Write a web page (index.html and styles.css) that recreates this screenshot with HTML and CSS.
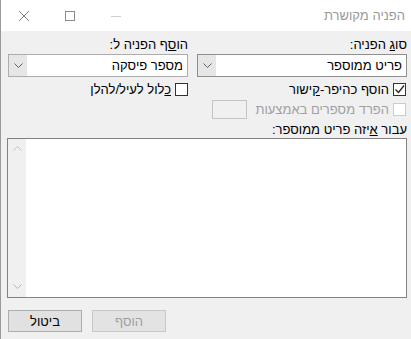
FILE: index.html
```html
<!DOCTYPE html>
<html lang="he" dir="rtl">
<head>
    <meta charset="UTF-8"/>
    <title>הפניה מקושרת</title>
    <link rel="stylesheet" href="styles.css">
</head>
<body>

<div class="window">
    <div class="titlebar">
        <span class="title">הפניה מקושרת</span>
        <div class="caption-buttons">
            <span class="cap-btn">
                <svg width="12" height="12" viewBox="0 0 12 12"><path d="M1 6.5h10" stroke="#d0d0d0" stroke-width="1"/></svg>
            </span>
            <span class="cap-btn">
                <svg width="12" height="12" viewBox="0 0 12 12"><rect x="1.5" y="1.5" width="9" height="9" fill="none" stroke="#8a8a8a" stroke-width="1"/></svg>
            </span>
            <span class="cap-btn">
                <svg width="12" height="12" viewBox="0 0 12 12"><path d="M1 1l10 10M11 1L1 11" stroke="#8a8a8a" stroke-width="1"/></svg>
            </span>
        </div>
    </div>

    <div class="content">
        <div class="columns">
            <div class="col col-right">
                <label class="field-label">סו<u>ג</u> הפניה:</label>
                <div class="select">
                    <span class="select-value">פריט ממוספר</span>
                    <span class="select-arrow">
                        <svg width="9" height="5" viewBox="0 0 9 5"><path d="M0.5 0.5l4 4 4-4" fill="none" stroke="#606060" stroke-width="1"/></svg>
                    </span>
                </div>
                <div class="check-row">
                    <span class="checkbox checked">
                        <svg width="11" height="11" viewBox="0 0 11 11"><path d="M1.5 5.5l3 3 5.5-7" fill="none" stroke="#222" stroke-width="1.3"/></svg>
                    </span>
                    <span>הוסף כהיפר-<u>ק</u>ישור</span>
                </div>
                <div class="check-row disabled">
                    <span class="checkbox"></span>
                    <span>הפרד מספרים באמצעות</span>
                    <span class="small-input"></span>
                </div>
            </div>

            <div class="col col-left">
                <label class="field-label">הו<u>ס</u>ף הפניה ל:</label>
                <div class="select">
                    <span class="select-value">מספר פיסקה</span>
                    <span class="select-arrow">
                        <svg width="9" height="5" viewBox="0 0 9 5"><path d="M0.5 0.5l4 4 4-4" fill="none" stroke="#606060" stroke-width="1"/></svg>
                    </span>
                </div>
                <div class="check-row">
                    <span class="checkbox"></span>
                    <span><u>כ</u>לול לעיל/להלן</span>
                </div>
            </div>
        </div>

        <label class="field-label list-label">עבור <u>א</u>יזה פריט ממוספר:</label>
        <div class="listbox">
            <div class="list-items"></div>
            <div class="scrollbar">
                <svg width="9" height="5" viewBox="0 0 9 5"><path d="M0.5 4.5l4-4 4 4" fill="none" stroke="#c4c4c4" stroke-width="1"/></svg>
                <svg width="9" height="5" viewBox="0 0 9 5"><path d="M0.5 0.5l4 4 4-4" fill="none" stroke="#b4b4b4" stroke-width="1"/></svg>
            </div>
        </div>

        <div class="buttons">
            <button class="btn" disabled>הוסף</button>
            <button class="btn">ביטול</button>
        </div>
    </div>
</div>

</body>
</html>
```

FILE: styles.css
```css
* {
    box-sizing: border-box;
}

body {
    margin: 0;
    font-family: "Liberation Sans", "DejaVu Sans", sans-serif;
    font-size: 13px;
    color: #000;
    background: #f0f0f0;
}

.window {
    width: 411px;
    height: 339px;
    background: #f0f0f0;
    border-left: 1px solid #9a9a9a;
    display: flex;
    flex-direction: column;
}

.titlebar {
    height: 31px;
    background: #fff;
    display: flex;
    align-items: center;
    justify-content: space-between;
}

.title {
    padding-right: 6px;
    color: #999;
}

.caption-buttons {
    display: flex;
    height: 31px;
}

.cap-btn {
    width: 46px;
    display: flex;
    align-items: center;
    justify-content: center;
}

.content {
    flex: 1;
    padding: 6px 4px 0 6px;
    display: flex;
    flex-direction: column;
}

.columns {
    display: flex;
    gap: 9px;
}

.col-right {
    width: 210px;
}

.col-left {
    width: 180px;
}

.field-label {
    display: block;
    height: 15px;
    line-height: 15px;
    margin-bottom: 2px;
}

.select {
    height: 23px;
    background: #fff;
    border: 1px solid #8f8f8f;
    display: flex;
    align-items: center;
    justify-content: space-between;
}

.col-left .select {
    border-color: #adadad;
}

.select-value {
    padding-right: 4px;
}

.select-arrow {
    width: 18px;
    height: 21px;
    background: #e6e6e6;
    display: flex;
    align-items: center;
    justify-content: center;
}

.check-row {
    display: flex;
    align-items: center;
    gap: 4px;
    height: 16px;
    margin-top: 4px;
}

.check-row + .check-row {
    height: 19px;
    margin-top: 3px;
}

.check-row.disabled {
    color: #a0a0a0;
}

.checkbox {
    width: 13px;
    height: 13px;
    flex-shrink: 0;
    background: #fff;
    border: 1px solid #333;
    display: flex;
    align-items: center;
    justify-content: center;
}

.col-right .checkbox {
    margin-right: 1px;
}

.disabled .checkbox {
    border-color: #ccc;
}

.small-input {
    width: 35px;
    height: 19px;
    margin-right: 4px;
    border: 1px solid #c4c4c4;
    background: #f0f0f0;
}

.list-label {
    margin-top: 3px;
    margin-bottom: 1px;
}

.listbox {
    height: 160px;
    border: 1px solid #828282;
    background: #fff;
    display: flex;
}

.list-items {
    flex: 1;
}

.scrollbar {
    width: 18px;
    background: #f0f0f0;
    display: flex;
    flex-direction: column;
    align-items: center;
    justify-content: space-between;
    padding: 7px 0 8px;
}

.buttons {
    display: flex;
    justify-content: flex-end;
    gap: 10px;
    margin-top: 12px;
    padding-left: 1px;
}

.btn {
    width: 74px;
    height: 22px;
    font-family: inherit;
    font-size: 13px;
    color: #000;
    background: #e1e1e1;
    border: 1px solid #adadad;
    padding: 0;
}

.btn:disabled {
    color: #a0a0a0;
    background: #e3e3e3;
    border-color: #c8c8c8;
}
```
